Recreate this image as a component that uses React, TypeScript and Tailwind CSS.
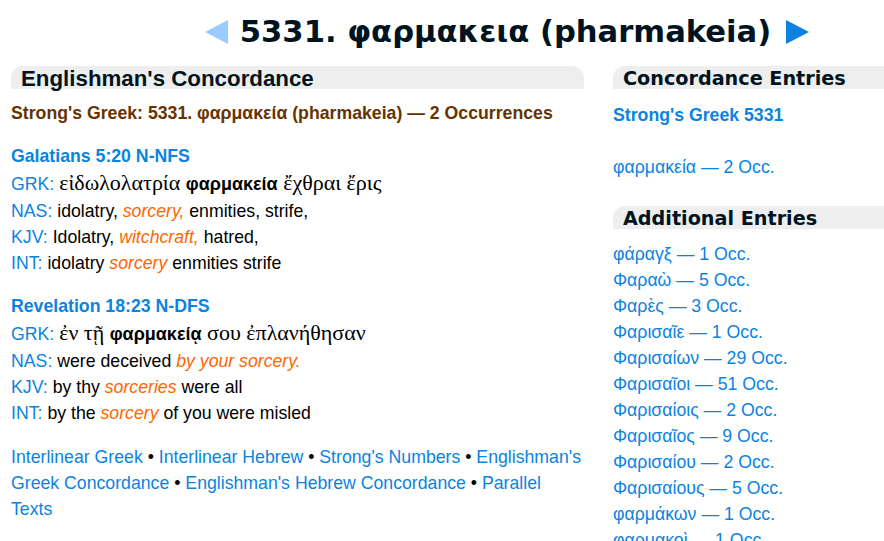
import React from "react";

const sans = "font-['Liberation_Sans',Arial,sans-serif]";
const verd = "font-['DejaVu_Sans',Verdana,sans-serif]";
const serif = "font-['Liberation_Serif','Times_New_Roman',serif]";

type Verse = {
  ref: string;
  grk: React.ReactNode;
  nas: React.ReactNode;
  kjv: React.ReactNode;
  int: React.ReactNode;
};

const Hi = ({ children }: { children: React.ReactNode }) => (
  <i className="text-[#ff6600]">{children}</i>
);

const verses: Verse[] = [
  {
    ref: "Galatians 5:20 N-NFS",
    grk: (
      <>
        <span className={serif}>εἰδωλολατρία </span>
        <b className={`${sans} text-[18px]`}>φαρμακεία</b>
        <span className={serif}> ἔχθραι ἔρις</span>
      </>
    ),
    nas: (
      <>
        idolatry, <Hi>sorcery,</Hi> enmities, strife,
      </>
    ),
    kjv: (
      <>
        Idolatry, <Hi>witchcraft,</Hi> hatred,
      </>
    ),
    int: (
      <>
        idolatry <Hi>sorcery</Hi> enmities strife
      </>
    ),
  },
  {
    ref: "Revelation 18:23 N-DFS",
    grk: (
      <>
        <span className={serif}>ἐν τῇ </span>
        <b className={`${sans} text-[18px]`}>φαρμακείᾳ</b>
        <span className={serif}> σου ἐπλανήθησαν</span>
      </>
    ),
    nas: (
      <>
        were deceived <Hi>by your sorcery.</Hi>
      </>
    ),
    kjv: (
      <>
        by thy <Hi>sorceries</Hi> were all
      </>
    ),
    int: (
      <>
        by the <Hi>sorcery</Hi> of you were misled
      </>
    ),
  },
];

const entries = [
  ["φάραγξ", 1],
  ["Φαραὼ", 5],
  ["Φαρὲς", 3],
  ["Φαρισαῖε", 1],
  ["Φαρισαίων", 29],
  ["Φαρισαῖοι", 51],
  ["Φαρισαίοις", 2],
  ["Φαρισαῖος", 9],
  ["Φαρισαίου", 2],
  ["Φαρισαίους", 5],
  ["φαρμάκων", 1],
  ["φαρμακοὶ", 1],
];

function Label({ children }: { children: React.ReactNode }) {
  return <span className="text-[#0b83e0]">{children}: </span>;
}

function SideHeader({ children }: { children: React.ReactNode }) {
  return (
    <div
      className={`${verd} h-[23px] rounded-tl-[12px] bg-[#eeeeee] pl-[10px] text-[19.2px] leading-[25px] font-bold text-[#001320]`}
    >
      {children}
    </div>
  );
}

export default function App() {
  const links = [
    "Interlinear Greek",
    "Interlinear Hebrew",
    "Strong's Numbers",
    "Englishman's Greek Concordance",
    "Englishman's Hebrew Concordance",
    "Parallel Texts",
  ];
  return (
    <div className="h-[541px] w-[884px] overflow-hidden bg-white">
      <div className={`${sans} w-[1014px] text-[17.7px] leading-[26px] text-black`}>
        <div className="flex h-[66px] items-start justify-center pt-[11px]">
          <div className={`${verd} flex items-center text-[30.6px] leading-[42px] font-bold text-[#001320]`}>
            <svg width="23" height="24" viewBox="0 0 23 24" className="mr-[12px]">
              <polygon points="23,0 23,24 0,12" fill="#99ccff" />
            </svg>
            <span>5331. φαρμακεια (pharmakeia)</span>
            <svg width="23" height="24" viewBox="0 0 23 24" className="ml-[15px]">
              <polygon points="0,0 0,24 23,12" fill="#0b83e0" />
            </svg>
          </div>
        </div>

        <div className="flex gap-[27px] pl-[11px]">
          <div className="w-[575px]">
            <div
              className={`${sans} mr-[2px] h-[23px] rounded-t-[12px] bg-[#eeeeee] pl-[10px] text-[22.3px] leading-[25px] font-bold text-[#001320]`}
            >
              Englishman's Concordance
            </div>
            <div className="mt-[11px] font-bold text-[#663300]">
              Strong's Greek: 5331. φαρμακεία (pharmakeia) — 2 Occurrences
            </div>
            {verses.map((v) => (
              <div key={v.ref} className="mt-[17px]">
                <div className="font-bold text-[#0b83e0]">{v.ref}</div>
                <div className="text-[22px] leading-[28px]">
                  <span className="text-[17.7px]">
                    <Label>GRK</Label>
                  </span>
                  {v.grk}
                </div>
                <div>
                  <Label>NAS</Label>
                  {v.nas}
                </div>
                <div>
                  <Label>KJV</Label>
                  {v.kjv}
                </div>
                <div>
                  <Label>INT</Label>
                  {v.int}
                </div>
              </div>
            ))}
            <div className="mt-[18px]">
              {links.map((l, i) => (
                <React.Fragment key={l}>
                  <span className="text-[#0b83e0]">{l}</span>
                  {i < links.length - 1 && <span> • </span>}
                </React.Fragment>
              ))}
            </div>
          </div>

          <div className="w-[390px]">
            <SideHeader>Concordance Entries</SideHeader>
            <div className="mt-[13px] font-bold text-[#0b83e0]">Strong's Greek 5331</div>
            <div className="mt-[26px] text-[#0b83e0]">φαρμακεία — 2 Occ.</div>
            <div className="mt-[26px]">
              <SideHeader>Additional Entries</SideHeader>
            </div>
            <div className="mt-[12px] text-[#0b83e0]">
              {entries.map(([w, n]) => (
                <div key={w as string}>
                  {w} — {n} Occ.
                </div>
              ))}
            </div>
          </div>
        </div>
      </div>
    </div>
  );
}
